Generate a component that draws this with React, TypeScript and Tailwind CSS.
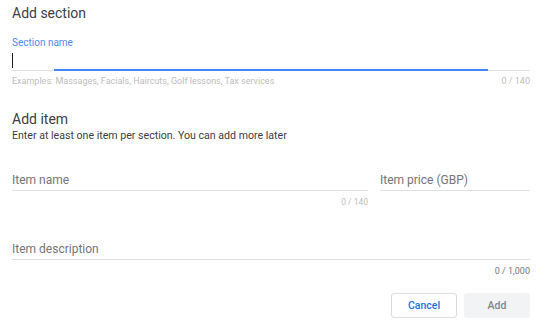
export default function App() {
  return (
    <div
      className="w-[545px] h-[325px] bg-white pl-3 pr-[15px] text-[#202124] overflow-hidden"
      style={{ fontFamily: "Roboto, 'Liberation Sans', sans-serif" }}
    >
      {/* Add section */}
      <h2 className="pt-[4px] text-[14px] leading-[18px] text-[#3c4043]">Add section</h2>

      <div className="mt-[15px]">
        <div className="text-[10px] leading-[12px] text-[#4a8af4]">Section name</div>
        <div className="relative h-[20px]">
          <div className="absolute left-0 top-[4px] w-px h-[15px] bg-[#202124]" />
        </div>
        <div className="flex h-[2px] items-end">
          <div className="w-[42px] h-px bg-[#e0e0e0]" />
          <div className="flex-1 h-[2px] bg-[#4285f4]" />
          <div className="w-[42px] h-px bg-[#e0e0e0]" />
        </div>
        <div className="flex justify-between mt-[5px] text-[9px] leading-[10px] text-[#bdbdbd]">
          <span>Examples: Massages, Facials, Haircuts, Golf lessons, Tax services</span>
          <span>0 / 140</span>
        </div>
      </div>

      {/* Add item */}
      <h3 className="mt-[24px] text-[14px] leading-[18px] text-[#3c4043]">Add item</h3>
      <p className="mt-px text-[10.6px] leading-[14px] text-[#3c4043]">
        Enter at least one item per section. You can add more later
      </p>

      <div className="mt-[29px] flex gap-3">
        <div className="flex-1">
          <div className="text-[12px] leading-[16px] text-[#757575] pb-[2px] border-b border-[#e0e0e0]">
            Item name
          </div>
          <div className="mt-[6px] text-right text-[8.5px] leading-[10px] text-[#bdbdbd]">0 / 140</div>
        </div>
        <div className="w-[150px]">
          <div className="text-[12px] leading-[16px] text-[#757575] pb-[2px] border-b border-[#e0e0e0]">
            Item price (GBP)
          </div>
        </div>
      </div>

      <div className="mt-[34px]">
        <div className="text-[12px] leading-[16px] text-[#757575] pb-[2px] border-b border-[#e0e0e0]">
          Item description
        </div>
        <div className="mt-[6px] text-right text-[9px] leading-[10px] text-[#757575]">0 / 1,000</div>
      </div>

      <div className="mt-[17px] flex justify-end gap-[7px]">
        <button className="w-[66px] h-[25px] rounded-[3px] border border-[#dadce0] bg-white text-[10.5px] font-medium text-[#1a73e8]">
          Cancel
        </button>
        <button className="w-[66px] h-[25px] rounded-[3px] bg-[#f1f3f4] text-[10.5px] font-medium text-[#80868b]">
          Add
        </button>
      </div>
    </div>
  );
}
